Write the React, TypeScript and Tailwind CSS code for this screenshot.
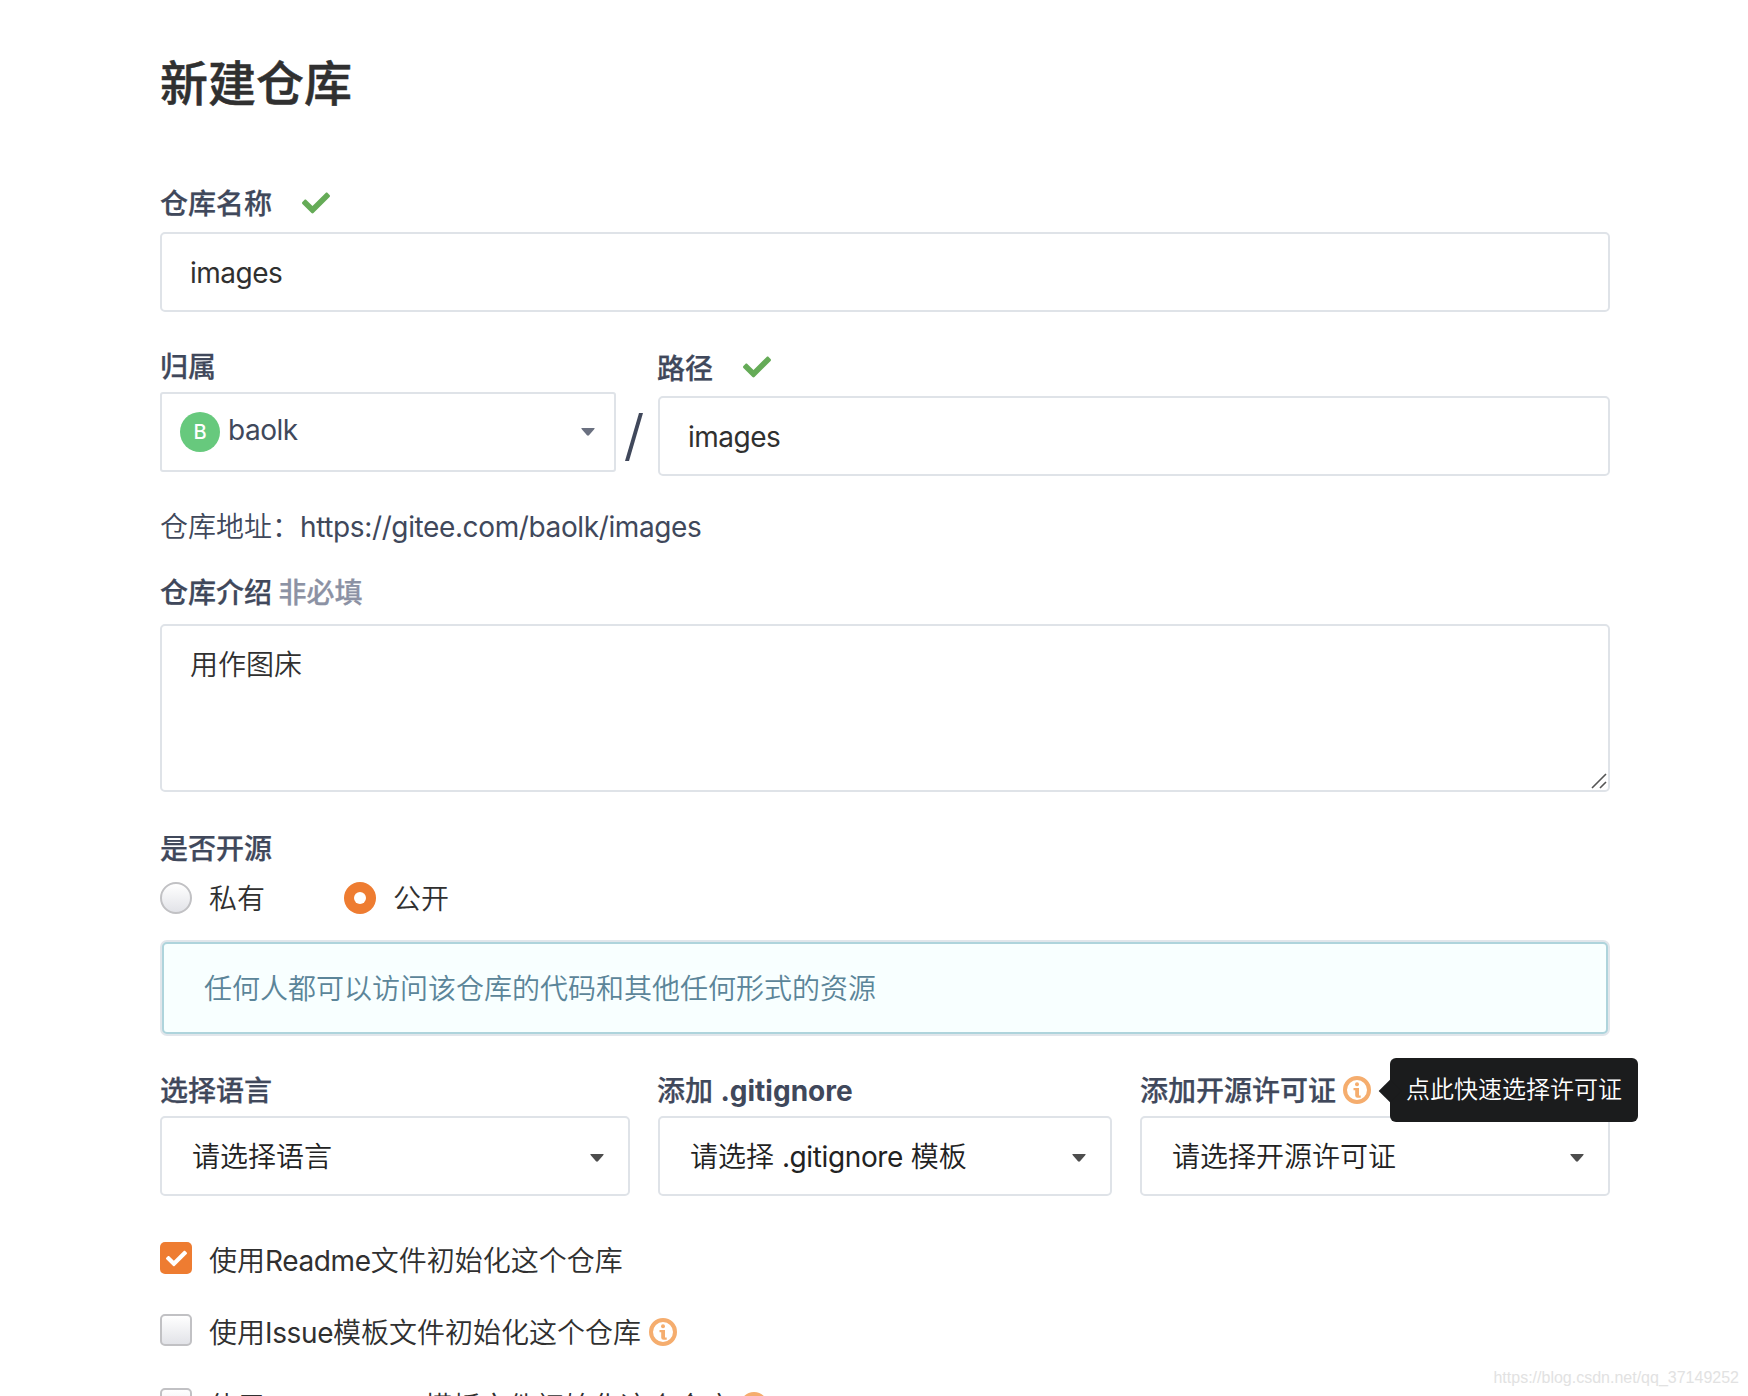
import { useState } from "react";
import { FaCheck } from "react-icons/fa";

const labelClass = "font-medium text-[28px] leading-[40px] text-[#40485b] [-webkit-text-stroke:0.25px]";
const fieldClass = "block w-full h-20 rounded-[5px] border-2 border-[#dfe3e8] bg-white px-[28px] pt-px text-[28px] font-normal tracking-[-0.5px] text-[#303030] outline-none";

function CheckMark() {
  return <FaCheck className="w-[28px] h-[28px] text-[#65ab57]" />;
}

function Caret({ className = "" }: { className?: string }) {
  return (
    <svg viewBox="0 0 14 8" className={`w-[14px] h-2 ${className}`}>
      <path d="M1 0h12q1.200 0 .4 1L8 7.300q-1 .9-2 0L.6 1Q-.2 0 1 0z" fill="currentColor" />
    </svg>
  );
}

function InfoIcon() {
  return (
    <svg viewBox="0 0 28 28" className="w-7 h-7 shrink-0 text-[#f5ad6e]">
      <circle cx="14" cy="14" r="12" fill="none" stroke="currentColor" strokeWidth="4" />
      <circle cx="14" cy="8.200" r="2" fill="currentColor" />
      <path d="M10.500 12h5.500v7.600h1.700v2.200h-3.200q-2.300 0-2.300-2.200v-5.400h-1.700z" fill="currentColor" />
    </svg>
  );
}

// Latin runs are set a little tighter than the Chinese around them
function Latin({ children }: { children: string }) {
  return <span className="font-normal tracking-[-0.38px]">{children}</span>;
}

function Select({ children }: { children: React.ReactNode }) {
  return (
    <button className="flex h-20 w-full items-center justify-between rounded-[5px] border-2 border-[#dfe3e8] bg-white pl-[30px] pr-6 text-[28px] text-[#222]">
      <span className="mt-px">{children}</span>
      <Caret className="mt-1 text-[#4d4d4d]" />
    </button>
  );
}

function Radio({ label, checked, onSelect }: { label: string; checked: boolean; onSelect: () => void }) {
  return (
    <button onClick={onSelect} className="flex items-center text-[28px] leading-[32px] text-[#303030]">
      {checked ? (
        <span className="flex w-8 h-8 items-center justify-center rounded-full bg-[#ee7c31]">
          <span className="w-3 h-3 rounded-full bg-white" />
        </span>
      ) : (
        <span className="w-8 h-8 rounded-full border-2 border-[#c1c1c4] bg-linear-to-b from-white to-[#e2e3e8]" />
      )}
      <span className="ml-[17px] mt-0.5">{label}</span>
    </button>
  );
}

type Option = { before: string; latin: string; after: string; info: boolean; checked: boolean };

function Checkbox({ option, onToggle }: { option: Option; onToggle: () => void }) {
  return (
    <button onClick={onToggle} className="flex h-9 items-start text-[28px] leading-[36px] text-[#303030] last:mt-0.5">
      {option.checked ? (
        <span className="flex w-8 h-8 items-center justify-center rounded-[5px] bg-[#ee7c31]">
          <FaCheck className="w-[21px] h-[21px] text-white" />
        </span>
      ) : (
        <span className="w-8 h-8 rounded-[5px] border-2 border-[#c1c1c4] bg-linear-to-b from-white to-[#e2e3e8]" />
      )}
      <span className="ml-[17px] mr-2 mt-px whitespace-nowrap">
        {option.before}<Latin>{option.latin}</Latin>{option.after}
      </span>
      {option.info && <span className="mt-1"><InfoIcon /></span>}
    </button>
  );
}

export default function App() {
  const [name, setName] = useState("images");
  const [path, setPath] = useState("images");
  const [desc, setDesc] = useState("用作图床");
  const [isPublic, setIsPublic] = useState(true);
  const [options, setOptions] = useState<Option[]>([
    { before: "使用", latin: "Readme", after: "文件初始化这个仓库", info: false, checked: true },
    { before: "使用", latin: "Issue", after: "模板文件初始化这个仓库", info: true, checked: false },
    { before: "使用", latin: "Pull Request", after: "模板文件初始化这个仓库", info: true, checked: false },
  ]);

  const toggleOption = (index: number) => {
    setOptions(options.map((o, i) => (i === index ? { ...o, checked: !o.checked } : o)));
  };

  return (
    <div className="relative h-[1396px] w-[1748px] overflow-hidden bg-white pl-40 pr-[138px] font-['Inter','Noto_Sans_CJK_SC',sans-serif] font-[350]">
      <h1 className="pt-[49px] text-[48px] leading-[70px] font-medium text-[#303030] [-webkit-text-stroke:0.5px]">新建仓库</h1>

      {/* Name */}
      <div className="mt-[65px] flex h-12 items-start gap-[30px]">
        <label className={labelClass}>仓库名称</label>
        <span className="mt-[5px]"><CheckMark /></span>
      </div>
      <input value={name} onChange={(e) => setName(e.target.value)} className={fieldClass} />

      {/* Owner / path */}
      <div className="mt-[35px] flex">
        <div className="w-[456px]">
          <label className={`block h-[45px] ${labelClass}`}>归属</label>
          <button className="flex h-20 w-full items-center rounded-[3px] border-2 border-[#dfe3e8] pl-[18px] pr-[19px] text-[28px] text-[#40485b]">
            <span className="flex w-10 h-10 items-center justify-center rounded-full bg-[#67c97d] text-[20px] font-medium text-white">B</span>
            <span className="ml-2 mb-[5px] font-normal tracking-[-0.5px]">baolk</span>
            <Caret className="ml-auto text-[#6a7080]" />
          </button>
        </div>
        <div className="flex w-[42px] pl-[9px] pt-[66px]">
          <svg viewBox="0 0 18 48" className="h-12 w-[18px]">
            <path d="M14 0h4L4 48H0z" fill="#40485b" />
          </svg>
        </div>
        <div className="flex-1">
          <div className="flex h-[49px] items-start gap-[30px] pt-0.5">
            <label className={`-ml-px ${labelClass}`}>路径</label>
            <span className="mt-[4px]"><CheckMark /></span>
          </div>
          <input value={path} onChange={(e) => setPath(e.target.value)} className={fieldClass} />
        </div>
      </div>

      <p className="mt-[31px] text-[28px] leading-[40px] text-[#40485b]">
        仓库地址：<Latin>https://gitee.com/baolk/images</Latin>
      </p>

      {/* Description */}
      <label className={`mt-[26px] block ${labelClass}`}>
        仓库介绍 <span className="-ml-px text-[#8c92a4]">非必填</span>
      </label>
      <div className="relative mt-[11px]">
        <textarea
          value={desc}
          onChange={(e) => setDesc(e.target.value)}
          className="block h-[168px] w-full resize-none rounded-[5px] border-2 border-[#dfe3e8] px-[28px] pt-[19px] text-[28px] leading-[40px] text-[#303030] outline-none"
        />
        <svg viewBox="0 0 16 16" className="absolute right-[3px] bottom-[3px] h-4 w-4">
          <path d="M1 15 15 1M9 15l6-6" stroke="#555" strokeWidth="1.600" />
        </svg>
      </div>

      {/* Visibility */}
      <label className={`mt-[37px] block ${labelClass}`}>是否开源</label>
      <div className="mt-[13px] flex h-8 gap-[79px]">
        <Radio label="私有" checked={!isPublic} onSelect={() => setIsPublic(false)} />
        <Radio label="公开" checked={isPublic} onSelect={() => setIsPublic(true)} />
      </div>
      <div className="mt-[26px] rounded-[7px] bg-[#e1e6eb] p-0.5">
        <div className="flex h-[92px] items-center rounded-[5px] border-2 border-[#aed4dc] bg-[#f8ffff] px-10 pt-0.5 text-[28px] text-[#5b8599]">
          任何人都可以访问该仓库的代码和其他任何形式的资源
        </div>
      </div>

      {/* Templates */}
      <div className="mt-[35px] flex gap-7">
        <div className="w-[470px]">
          <label className={`block h-[45px] ${labelClass}`}>选择语言</label>
          <Select>请选择语言</Select>
        </div>
        <div className="w-[454px]">
          <label className={`-ml-px block h-[45px] ${labelClass}`}>
            添加 <b className="font-bold [-webkit-text-stroke:0]">.gitignore</b>
          </label>
          <Select>请选择 <Latin>.gitignore</Latin> 模板</Select>
        </div>
        <div className="w-[470px]">
          <div className="relative flex h-[45px] items-start">
            <label className={labelClass}>添加开源许可证</label>
            <span className="ml-[7px] mt-[5px]"><InfoIcon /></span>
            <div className="absolute left-[250px] -top-[13px] flex h-16 w-[248px] items-center justify-center rounded-md bg-[#1b1c1d] text-[24px] text-white">
              <span className="absolute -left-2 top-[25px] h-4 w-4 rotate-45 bg-[#1b1c1d]" />
              <span className="relative whitespace-nowrap">点此快速选择许可证</span>
            </div>
          </div>
          <Select>请选择开源许可证</Select>
        </div>
      </div>

      {/* Init options */}
      <div className="mt-[46px] flex flex-col items-start gap-9">
        {options.map((o, i) => (
          <Checkbox key={o.latin} option={o} onToggle={() => toggleOption(i)} />
        ))}
      </div>

      <span className="absolute right-[9px] bottom-[8px] font-['Liberation_Sans',sans-serif] text-[16px] leading-[20px] font-normal text-[#e2e2e2]">
        https://blog.csdn.net/qq_37149252
      </span>
    </div>
  );
}
